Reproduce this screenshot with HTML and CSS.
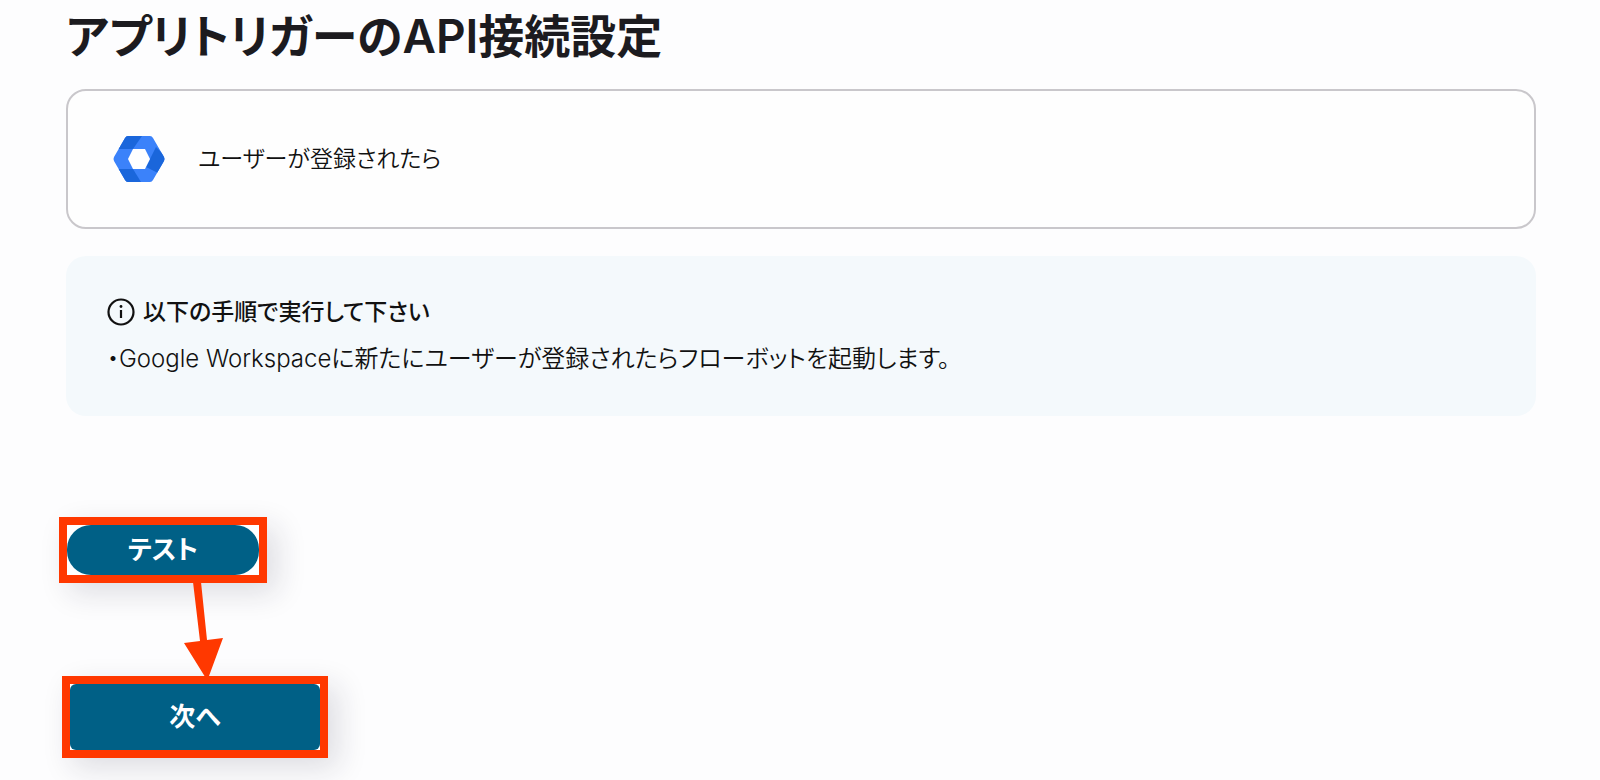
FILE: index.html
```html
<!DOCTYPE html>
<html lang="ja">

<head>
    <meta charset="UTF-8">
    <meta content="width=device-width, initial-scale=1.0" name="viewport">
    <title>アプリトリガーのAPI接続設定</title>
    <link rel="stylesheet" href="styles.css">
</head>

<body>

    <main class="page">
        <h1 class="title">アプリトリガーのAPI接続設定</h1>

        <section class="trigger">
            <svg class="trigger-icon" viewBox="0 0 52 46" aria-hidden="true">
                <defs>
                    <clipPath id="hexagon">
                        <path d="M15 0H37Q39 0 40 2L51 21Q52 23 51 25L40 44Q39 46 37 46H15Q13 46 12 44L1 25Q0 23 1 21L12 2Q13 0 15 0Z" />
                    </clipPath>
                </defs>
                <g clip-path="url(#hexagon)">
                    <path fill="#3b82fa" d="M0 0H52V46H0Z" />
                    <path fill="#1a66db" d="M10 0H29L20 13H4Z" />
                    <path fill="#1a66db" d="M43 11L52 20V26L45 37L33 31L37 23Z" />
                    <path fill="#1a66db" d="M4 33H20L28 46H10Z" />
                </g>
                <path fill="#fff" d="M20 13H32L37 23L32 33H20L15 23Z" />
            </svg>
            <p class="trigger-name">ユーザーが登録されたら</p>
        </section>

        <!-- 手順の案内 -->
        <section class="notice">
            <h2 class="notice-title">
                <svg class="notice-icon" viewBox="0 0 28 28" aria-hidden="true">
                    <circle cx="14" cy="14" r="12.5" fill="none" stroke="currentColor" stroke-width="2.2" />
                    <path d="M14 12V20" stroke="currentColor" stroke-width="2.2" />
                    <circle cx="14" cy="8.5" r="1.4" fill="currentColor" />
                </svg>
                以下の手順で実行して下さい
            </h2>
            <p class="notice-text">・Google Workspaceに新たにユーザーが登録されたらフローボットを起動します。</p>
        </section>

        <div class="actions">
            <div class="mark mark-test">
                <button class="btn btn-test" type="button">テスト</button>
            </div>
            <div class="mark mark-next">
                <!-- テストから次へ向かう矢印 -->
                <svg class="arrow" viewBox="0 0 40 102" aria-hidden="true">
                    <path fill="#ff3800" d="M9 0H17L23 58L39 56L25 94V98H23L0 61L16 59Z" />
                </svg>
                <button class="btn btn-next" type="button">次へ</button>
            </div>
        </div>
    </main>

</body>

</html>
```
FILE: styles.css
```css
* {
    box-sizing: border-box;
}

body {
    margin: 0;
    background: #fdfdfe;
    color: #111;
    font-family: Inter, "Noto Sans CJK JP", sans-serif;
    font-feature-settings: "palt";
}

.page {
    min-height: 100vh;
    padding: 0 64px 16px 66px;
}

h1,
h2,
p {
    margin: 0;
}

.title {
    padding-top: 2px;
    color: #1c1b1f;
    font-size: 46px;
    font-weight: 600;
    line-height: 68px;
}

.trigger {
    display: flex;
    align-items: center;
    gap: 33px;
    margin-top: 19px;
    padding: 45px;
    min-height: 140px;
    border: 2px solid #c9c7cb;
    border-radius: 20px;
    background: #fefefe;
}

.trigger-icon {
    width: 52px;
    height: 46px;
}

.trigger-name {
    font-size: 23px;
    font-weight: 350;
    line-height: 34px;
}

.notice {
    margin-top: 27px;
    padding: 37px 41px;
    border-radius: 20px;
    background: #f4f9fc;
}

.notice-title {
    display: flex;
    align-items: center;
    gap: 8px;
    font-size: 23px;
    font-weight: 500;
    line-height: 38px;
}

.notice-icon {
    width: 28px;
    height: 28px;
}

.notice-text {
    margin-top: 8px;
    font-size: 24px;
    font-weight: 350;
    line-height: 40px;
}

.actions {
    display: flex;
    flex-direction: column;
    align-items: flex-start;
    margin: 101px 0 0 -7px;
}

.mark {
    border: 8px solid #ff3800;
    background: #fff;
    box-shadow: 10px 10px 30px rgba(30, 30, 60, 0.14);
}

.mark-next {
    position: relative;
    margin: 93px 0 0 3px;
}

.btn {
    display: block;
    padding: 0 0 6px;
    border: 0;
    background: #006086;
    color: #fff;
    font: inherit;
    font-feature-settings: inherit;
    font-size: 26px;
    font-weight: 600;
}

.btn-test {
    width: 192px;
    height: 50px;
    border-radius: 24px;
}

.btn-next {
    width: 250px;
    height: 66px;
    border-radius: 6px;
}

.arrow {
    position: absolute;
    left: 114px;
    bottom: 100%;
    width: 40px;
    height: 102px;
}
```
